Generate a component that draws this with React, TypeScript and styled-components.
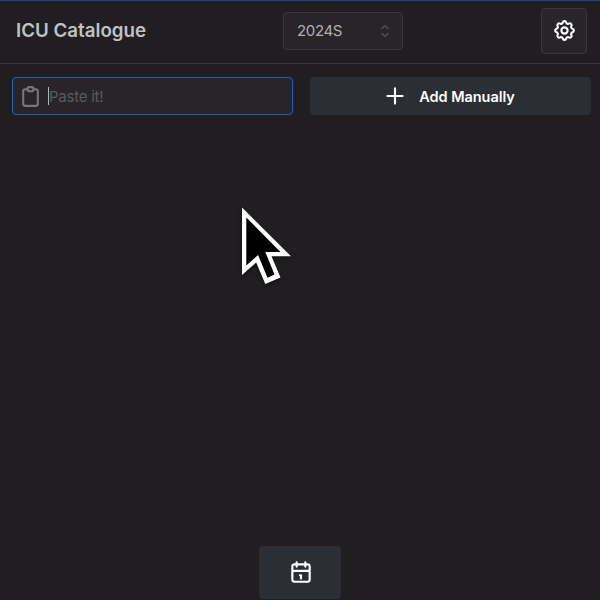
import React from 'react';
import styled, { createGlobalStyle } from 'styled-components';

const GlobalStyle = createGlobalStyle`
  * { box-sizing: border-box; }
  body { margin: 0; background: #201e20; }
  button { font: inherit; cursor: pointer; }
`;

const Page = styled.div`
  position: relative;
  display: flex;
  flex-direction: column;
  height: 600px;
  overflow: hidden;
  background: #201e20;
  border-top: 1px solid #0c4c94;
  font-family: Inter, sans-serif;
  color: #c1c2c5;
`;

const Header = styled.header`
  display: grid;
  grid-template-columns: 267px 120px 1fr;
  align-items: center;
  height: 63px;
  padding: 0 13px 3px 16px;
  border-bottom: 1px solid #38373a;
`;

const Title = styled.h1`
  margin: 0;
  padding-top: 1px;
  font-size: 18.7px;
  line-height: 26px;
  font-weight: 600;
  letter-spacing: 0.02px;
  white-space: nowrap;
`;

const TermSelect = styled.button`
  display: flex;
  align-items: center;
  justify-content: space-between;
  height: 38px;
  padding: 0 13px;
  border: 1px solid #39383b;
  border-radius: 4px;
  background: #272528;
  color: #b0b0b3;
  font-size: 15px;
  letter-spacing: -0.35px;
`;

const SettingsButton = styled.button`
  justify-self: end;
  display: grid;
  place-items: center;
  width: 46px;
  height: 46px;
  padding: 0;
  border: 1px solid #39383b;
  border-radius: 4px;
  background: #272528;
  color: #fff;
`;

const Actions = styled.section`
  display: grid;
  grid-template-columns: 281px 281px;
  gap: 17px;
  padding: 13px 8px 0 12px;
`;

const PasteField = styled.div`
  display: flex;
  align-items: center;
  height: 38px;
  padding-left: 5px;
  border: 1px solid #1b62b0;
  border-radius: 4px;
  background: #272528;
  color: #77767a;
`;

const Caret = styled.span`
  width: 1px;
  height: 18px;
  margin-left: 5px;
  background: #b5b5b8;
`;

const Placeholder = styled.span`
  font-size: 15px;
  letter-spacing: -0.25px;
  color: #5b5a5e;
`;

const AddButton = styled.button`
  display: flex;
  align-items: center;
  justify-content: center;
  gap: 11px;
  height: 38px;
  padding: 0 7px 0 3px;
  border: 0;
  border-radius: 4px;
  background: #2c2e36;
  color: #fff;
  font-size: 14.5px;
  letter-spacing: -0.05px;
  font-weight: 600;
`;

const Footer = styled.footer`
  display: flex;
  justify-content: center;
  margin-top: auto;
  padding-bottom: 1px;
`;

const CalendarButton = styled.button`
  display: grid;
  place-items: center;
  width: 82px;
  height: 53px;
  padding: 0 0 1px 1px;
  border: 0;
  border-radius: 4px;
  background: #2c2e36;
  color: #fff;
`;

const Pointer = styled.svg`
  position: absolute;
  left: 230px;
  top: 194px;
  filter: drop-shadow(0 2px 2px rgba(0, 0, 0, 0.45));
`;

const Chevrons = styled.svg`
  margin-right: -1px;
`;

type IconProps = { size: number; children: React.ReactNode; stroke?: number };

const Icon = ({ size, stroke = 2, children }: IconProps) => (
  <svg
    width={size}
    height={size}
    viewBox="0 0 24 24"
    fill="none"
    stroke="currentColor"
    strokeWidth={stroke}
    strokeLinecap="round"
    strokeLinejoin="round"
  >
    {children}
  </svg>
);

export default function App() {
  return (
    <Page>
      <GlobalStyle />
      <Header>
        <Title>ICU Catalogue</Title>
        <TermSelect>
          2024S
          <Chevrons width="10" height="14" viewBox="0 0 10 14" fill="none" stroke="#747377" strokeWidth="1">
            <path d="M1.5 5L5 1.5L8.5 5M1.5 9L5 12.5L8.5 9" />
          </Chevrons>
        </TermSelect>
        <SettingsButton aria-label="Settings">
          <Icon size={25}>
            <path d="M10.325 4.317c.426 -1.756 2.924 -1.756 3.35 0a1.724 1.724 0 0 0 2.573 1.066c1.543 -.94 3.31 .826 2.37 2.37a1.724 1.724 0 0 0 1.065 2.572c1.756 .426 1.756 2.924 0 3.35a1.724 1.724 0 0 0 -1.066 2.573c.94 1.543 -.826 3.31 -2.37 2.37a1.724 1.724 0 0 0 -2.572 1.065c-.426 1.756 -2.924 1.756 -3.35 0a1.724 1.724 0 0 0 -2.573 -1.066c-1.543 .94 -3.31 -.826 -2.37 -2.37a1.724 1.724 0 0 0 -1.065 -2.572c-1.756 -.426 -1.756 -2.924 0 -3.35a1.724 1.724 0 0 0 1.066 -2.573c-.94 -1.543 .826 -3.31 2.37 -2.37c1 .608 2.296 .07 2.572 -1.065z" />
            <circle cx="12" cy="12" r="3" />
          </Icon>
        </SettingsButton>
      </Header>
      <Actions>
        <PasteField>
          <Icon size={25}>
            <path d="M9 5h-2a2 2 0 0 0 -2 2v12a2 2 0 0 0 2 2h10a2 2 0 0 0 2 -2v-12a2 2 0 0 0 -2 -2h-2" />
            <rect x="9" y="3" width="6" height="4" rx="2" />
          </Icon>
          <Caret />
          <Placeholder>Paste it!</Placeholder>
        </PasteField>
        <AddButton>
          <Icon size={26}>
            <path d="M12 5v14M5 12h14" />
          </Icon>
          Add Manually
        </AddButton>
      </Actions>
      <Footer>
        <CalendarButton aria-label="Calendar">
          <Icon size={26}>
            <path d="M4 7a2 2 0 0 1 2 -2h12a2 2 0 0 1 2 2v12a2 2 0 0 1 -2 2h-12a2 2 0 0 1 -2 -2zM16 3v4M8 3v4M4 11h16M11 15h1M12 15v3" />
          </Icon>
        </CalendarButton>
      </Footer>
      <Pointer width="75" height="100" viewBox="0 0 75 100">
        <path d="M12 12.5L61 61.3H41.5L50.5 82.5L35.3 89L26.2 67.5L12 80Z" fill="#fff" />
        <path d="M16.3 22.5L50.5 57H35.3L44.5 79.6L37.5 82.7L28.1 60L16.3 70.5Z" fill="#000" />
      </Pointer>
    </Page>
  );
}
